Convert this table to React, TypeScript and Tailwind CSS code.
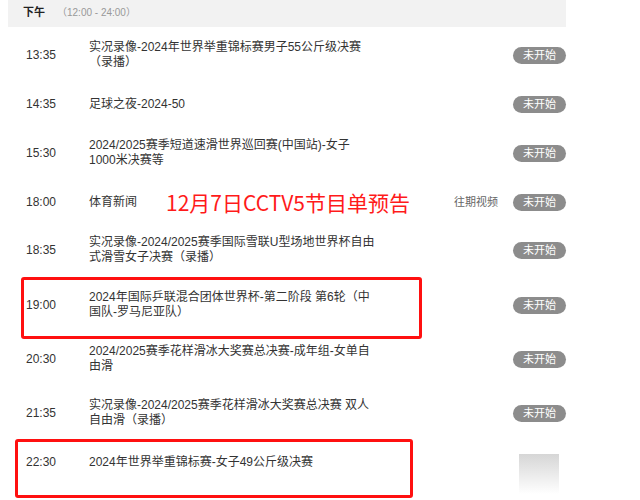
type Row = {
  time: string;
  lines: string[];
  h: string;
  replay?: boolean;
  pending?: boolean;
};

const rows: Row[] = [
  { time: "13:35", lines: ["实况录像-2024年世界举重锦标赛男子55公斤级决赛", "（录播）"], h: "h-[56px]", pending: true },
  { time: "14:35", lines: ["足球之夜-2024-50"], h: "h-[42px]", pending: true },
  { time: "15:30", lines: ["2024/2025赛季短道速滑世界巡回赛(中国站)-女子", "1000米决赛等"], h: "h-[56px]", pending: true },
  { time: "18:00", lines: ["体育新闻"], h: "h-[42px]", replay: true, pending: true },
  { time: "18:35", lines: ["实况录像-2024/2025赛季国际雪联U型场地世界杯自由", "式滑雪女子决赛（录播）"], h: "h-[54px]", pending: true },
  { time: "19:00", lines: ["2024年国际乒联混合团体世界杯-第二阶段 第6轮（中", "国队-罗马尼亚队）"], h: "h-[56px]", pending: true },
  { time: "20:30", lines: ["2024/2025赛季花样滑冰大奖赛总决赛-成年组-女单自", "由滑"], h: "h-[52px]", pending: true },
  { time: "21:35", lines: ["实况录像-2024/2025赛季花样滑冰大奖赛总决赛 双人", "自由滑（录播）"], h: "h-[56px]", pending: true },
  { time: "22:30", lines: ["2024年世界举重锦标赛-女子49公斤级决赛"], h: "h-[42px]" },
];

function StatusBadge() {
  return (
    <span className="flex h-[17px] w-[53px] items-center justify-center rounded-full bg-[#8c8c8c] text-[11px] leading-none text-white">
      未开始
    </span>
  );
}

function ScheduleRow({ row }: { row: Row }) {
  return (
    <div className={`flex items-center ${row.h}`}>
      <span className="w-[81px] shrink-0 pl-[18px] text-[12px] text-[#333]">{row.time}</span>
      <div className="flex flex-1 flex-col text-[12px] leading-[15px] text-[#333]">
        {row.lines.map((line) => (
          <span key={line} className="whitespace-nowrap">
            {line}
          </span>
        ))}
      </div>
      {row.replay && <span className="mr-[15px] text-[11px] text-[#666]">往期视频</span>}
      {row.pending ? (
        <StatusBadge />
      ) : (
        <div className="mr-[7px] mt-[24px] h-[40px] w-[40px] bg-gradient-to-b from-[#d6d6d6] to-white" />
      )}
    </div>
  );
}

export default function App() {
  return (
    <div
      className="relative h-[500px] w-[640px] overflow-hidden bg-white"
      style={{ fontFamily: '"Liberation Sans", "Noto Sans CJK SC", sans-serif' }}
    >
      <div className="ml-[8px] w-[558px]">
        <div className="flex h-[27px] items-center gap-[12px] bg-[#f2f2f2] pb-[2px] pl-[15px]">
          <span className="text-[11px] font-bold text-[#222]">下午</span>
          <span className="text-[10px] text-[#999]">（12:00 - 24:00）</span>
        </div>
        {rows.map((row) => (
          <ScheduleRow key={row.time} row={row} />
        ))}
      </div>

      <span
        className="absolute left-[166px] top-[189px] text-[21px] leading-[26px] text-[#ff1a1a]"
        style={{ fontFamily: '"Noto Sans CJK SC", sans-serif' }}
      >
        12月7日CCTV5节目单预告
      </span>

      <div className="absolute left-[21px] top-[277px] h-[62px] w-[401px] rounded-[3px] border-[3px] border-[#ff1010]" />
      <div className="absolute left-[15px] top-[439px] h-[59px] w-[398px] rounded-[3px] border-[3px] border-[#ff1010]" />
    </div>
  );
}
